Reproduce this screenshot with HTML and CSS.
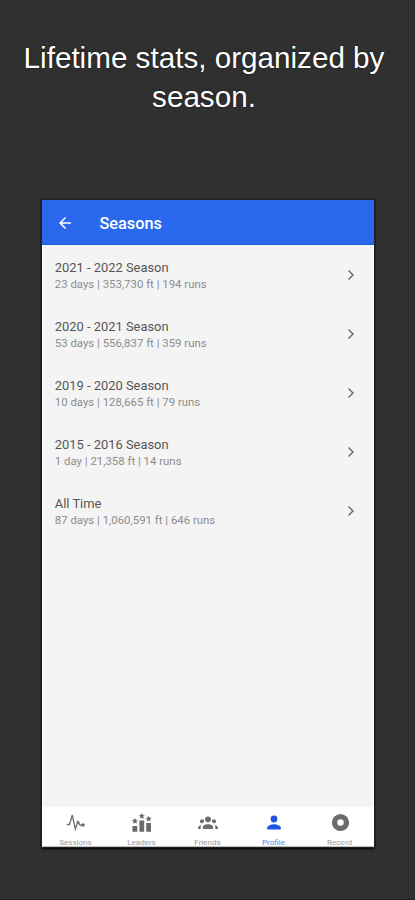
FILE: index.html
```html
<!DOCTYPE html>
<html lang="en">
<head>
<meta charset="utf-8">
<title>Seasons</title>
<link rel="stylesheet" href="styles.css">
</head>
<body>
<main class="promo">
  <h1 class="headline">Lifetime stats, organized by season.</h1>
  <section class="phone">
    <header class="appbar">
      <svg class="back" viewBox="0 0 24 24"><path d="M20 11H7.830l5.590-5.590L12 4l-8 8 8 8 1.410-1.410L7.830 13H20z"/></svg>
      <h2 class="title">Seasons</h2>
    </header>
    <ul class="list">
      <li class="row"><div><p class="name">2021 - 2022 Season</p><p class="stats">23 days | 353,730 ft | 194 runs</p></div><svg class="chevron" viewBox="0 0 8 12"><path d="M1.500 1.500 6 6l-4.500 4.500"/></svg></li>
      <li class="row"><div><p class="name">2020 - 2021 Season</p><p class="stats">53 days | 556,837 ft | 359 runs</p></div><svg class="chevron" viewBox="0 0 8 12"><path d="M1.500 1.500 6 6l-4.500 4.500"/></svg></li>
      <li class="row"><div><p class="name">2019 - 2020 Season</p><p class="stats">10 days | 128,665 ft | 79 runs</p></div><svg class="chevron" viewBox="0 0 8 12"><path d="M1.500 1.500 6 6l-4.500 4.500"/></svg></li>
      <li class="row"><div><p class="name">2015 - 2016 Season</p><p class="stats">1 day | 21,358 ft | 14 runs</p></div><svg class="chevron" viewBox="0 0 8 12"><path d="M1.500 1.500 6 6l-4.500 4.500"/></svg></li>
      <li class="row"><div><p class="name">All Time</p><p class="stats">87 days | 1,060,591 ft | 646 runs</p></div><svg class="chevron" viewBox="0 0 8 12"><path d="M1.500 1.500 6 6l-4.500 4.500"/></svg></li>
    </ul>
    <nav class="tabs">
      <a class="tab"><svg class="icon" viewBox="0 0 20 20"><path class="pulse" d="M.8 11.500h2.700L6.300 2l3 14 2.500-7.200 2.200 3.300h3"/><circle cx="17" cy="12" r="1.800"/><circle cx="12.100" cy="9.300" r="1.300"/></svg><span>Sessions</span></a>
      <a class="tab"><svg class="icon" viewBox="0 0 20 20"><path d="M.5 13h4.800v5.700H.5zM7.400 7.600h4.800v11.100H7.400zM14.200 10h4.800v8.700h-4.800z"/><path class="star" d="m2.900 5.500.8 1.500 1.700.3-1.200 1.200.3 1.700-1.600-.8-1.600.8.300-1.700-1.200-1.200L2.100 7zM9.800.6l.8 1.500 1.700.3-1.200 1.200.3 1.700-1.600-.8-1.600.8.300-1.700-1.200-1.200L9 2.100zM16.600 3.300l.8 1.500 1.700.3-1.200 1.200.3 1.700-1.600-.8-1.600.8.300-1.700-1.200-1.200 1.700-.3z"/></svg><span>Leaders</span></a>
      <a class="tab"><svg class="icon" viewBox="0 0 20 20"><circle cx="10" cy="6.300" r="2.900"/><circle cx="4" cy="8.300" r="2"/><circle cx="16" cy="8.300" r="2"/><path d="M4.800 16v-1.300c0-4.600 10.400-4.600 10.400 0V16zM0 16c0-2.500 1-3.600 3.200-3.900-.5 1.100-.7 2.300-.7 3.900zM20 16c0-2.500-1-3.600-3.200-3.900.5 1.100.7 2.300.7 3.900z"/></svg><span>Friends</span></a>
      <a class="tab active"><svg class="icon" viewBox="0 0 20 20"><circle cx="10" cy="6" r="3.400"/><path d="M3.200 16.500v-1.700c0-2.300 4.500-3.500 6.800-3.500s6.800 1.200 6.800 3.500v1.700z"/></svg><span>Profile</span></a>
      <a class="tab"><svg class="icon" viewBox="0 0 20 20"><circle cx="10.500" cy="9.500" r="8.600"/><circle class="hole" cx="10.500" cy="9.500" r="3.200"/></svg><span>Record</span></a>
    </nav>
  </section>
</main>
</body>
</html>
```
FILE: styles.css
```css
* { box-sizing: border-box; margin: 0; padding: 0; }
body { background: #303030; font-family: Roboto, sans-serif; }
.promo { height: 900px; display: flex; flex-direction: column; align-items: center; padding-top: 39px; border-bottom: 1px solid #2a2023; }
.headline { width: 400px; height: 161px; margin-right: 7px; text-align: center; color: #fff; font: 400 29.650px/38.500px "Liberation Sans", sans-serif; text-shadow: 0 0 2px #111; }
.phone { width: 332px; height: 647px; display: flex; flex-direction: column; background: #f4f4f4; border-left: 1px solid #fff; border-right: 1px solid #fff; box-shadow: 0 0 0 1px #222, 0 1px 2px 1px #000; }
.appbar { height: 45px; display: flex; align-items: center; margin: 0 -1px; padding: 1px 0 0 14px; background: #2a69ee; color: #fff; border-bottom: 1px solid #1b5ce0; }
.back { width: 18px; height: 18px; fill: #fff; }
.title { margin-left: 26px; padding-top: 2px; font-size: 16.300px; line-height: 20px; font-weight: 500; }
.list { flex: 1; list-style: none; }
.row { height: 58.900px; display: flex; justify-content: space-between; align-items: center; padding: 0 17.500px 0 12.300px; }
.row > div { padding-top: 4px; }
.name { font-size: 12.900px; line-height: 16px; color: #555; }
.stats { font-size: 11.400px; line-height: 17px; color: #8c8c8c; }
.chevron { width: 8px; height: 12px; margin-top: 2px; fill: none; stroke: #666; stroke-width: 1.400; }
.tabs { height: 40px; display: flex; background: #fff; overflow: hidden; border-bottom: 1px solid #bbb; }
.tab { flex: 1; display: flex; flex-direction: column; align-items: center; padding-top: 6px; color: #999; font-size: 8px; line-height: 10px; }
.icon { width: 20px; height: 20px; fill: #6b6b6b; margin-bottom: 5px; flex: none; }
.star { stroke: #6b6b6b; stroke-width: .5; }
.pulse { fill: none; stroke: #6b6b6b; stroke-width: 1.300; }
.hole { fill: #fff; }
.active { color: #5c84ec; }
.active .icon { fill: #1f55df; }
```
